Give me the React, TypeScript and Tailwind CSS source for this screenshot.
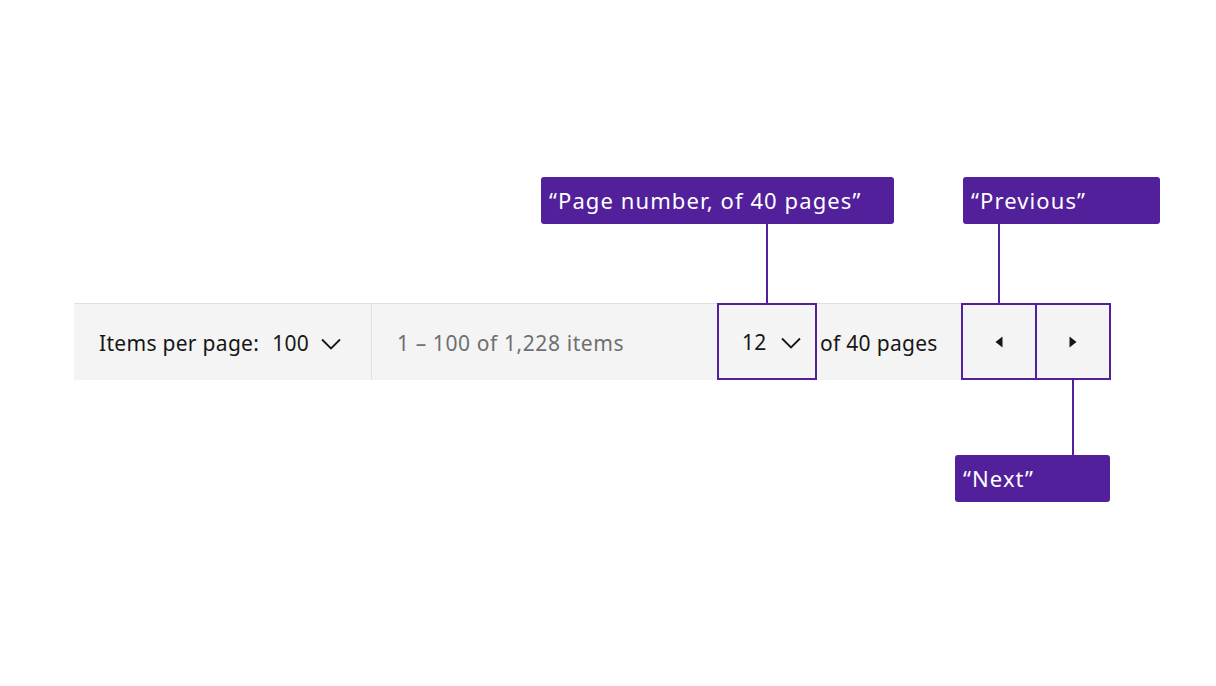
const purple = "border-[#51209a]";

function Chevron({ className }: { className: string }) {
  return (
    <svg width="20" height="12" viewBox="0 0 20 12" className={className}>
      <path d="M1 1.5 L10 10.5 L19 1.5" fill="none" stroke="currentColor" strokeWidth="1.8" />
    </svg>
  );
}

function Caret({ dir }: { dir: "left" | "right" }) {
  return (
    <svg width="8" height="12" viewBox="0 0 8 12" className="text-[#161616]">
      {dir === "left" ? (
        <path d="M7.5 0.5 L0.5 6 L7.5 11.5 Z" fill="currentColor" />
      ) : (
        <path d="M0.5 0.5 L7.5 6 L0.5 11.5 Z" fill="currentColor" />
      )}
    </svg>
  );
}

function Label({ text, className }: { text: string; className: string }) {
  return (
    <div
      className={`absolute flex h-[47px] items-center rounded-[3px] bg-[#51209a] px-2 text-[22px] tracking-[1.1px] text-white ${className}`}
    >
      {text}
    </div>
  );
}

export default function App() {
  return (
    <div className="relative h-[686px] w-[1216px] bg-white font-['Noto_Sans',sans-serif]">
      <div className="pl-[74px] pt-[303px]">
        <div className="flex h-[77px] w-[1037px] items-stretch border-t border-[#e0e0e0] bg-[#f4f4f4] text-[21px] tracking-[0.3px] text-[#161616]">
          <div className="flex w-[298px] items-center border-r border-[#e0e0e0] pl-[25px] pt-[3px]">
            <span>Items per page:</span>
            <span className="ml-[13px]">100</span>
            <Chevron className="ml-[12px]" />
          </div>
          <div className="flex flex-1 items-center pl-[25px] pt-[3px] text-[#6f6f6f] tracking-[0.6px]">
            1 – 100 of 1,228 items
          </div>
          <div className={`-mt-px flex w-[100px] items-center border-2 ${purple} pl-[23px] pt-[3px]`}>
            <span>12</span>
            <Chevron className="ml-[14px]" />
          </div>
          <div className="flex w-[144px] items-center pl-[3px] pt-[3px]">of 40 pages</div>
          <div className={`-mt-px flex w-[76px] items-center justify-center border-2 ${purple}`}>
            <Caret dir="left" />
          </div>
          <div className={`-mt-px flex w-[74px] items-center justify-center border-2 border-l-0 ${purple}`}>
            <Caret dir="right" />
          </div>
        </div>
      </div>

      <Label text="“Page number, of 40 pages”" className="left-[541px] top-[177px] w-[353px]" />
      <div className="absolute left-[766px] top-[223px] h-[81px] w-[2px] bg-[#51209a]" />

      <Label text="“Previous”" className="left-[963px] top-[177px] w-[197px]" />
      <div className="absolute left-[998px] top-[223px] h-[81px] w-[2px] bg-[#51209a]" />

      <Label text="“Next”" className="left-[955px] top-[455px] w-[155px]" />
      <div className="absolute left-[1072px] top-[380px] h-[75px] w-[2px] bg-[#51209a]" />
    </div>
  );
}
